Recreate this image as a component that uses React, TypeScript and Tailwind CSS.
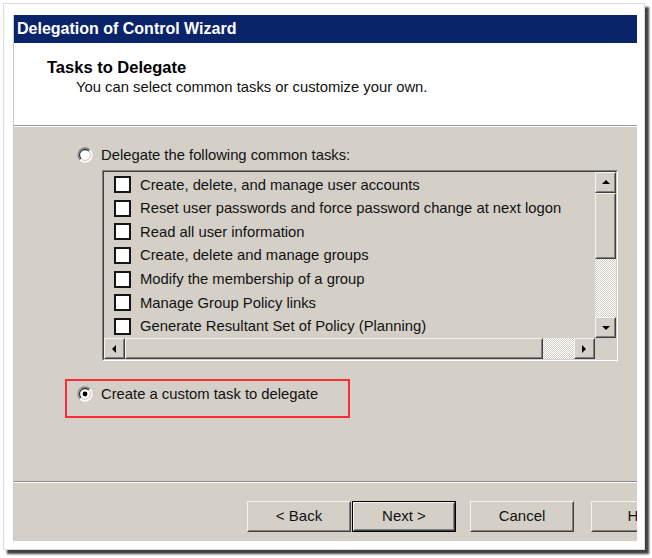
import React from "react";

const font = { fontFamily: '"Liberation Sans", Arial, sans-serif' };

const tasks = [
  "Create, delete, and manage user accounts",
  "Reset user passwords and force password change at next logon",
  "Read all user information",
  "Create, delete and manage groups",
  "Modify the membership of a group",
  "Manage Group Policy links",
  "Generate Resultant Set of Policy (Planning)",
];

function Radio({ checked }: { checked?: boolean }) {
  return (
    <svg width="16" height="16" viewBox="0 0 16 16" className="shrink-0">
      <circle cx="8" cy="8" r="6.5" fill="#fff" />
      <path d="M3.05 12.95 A7 7 0 0 1 12.95 3.05" fill="none" stroke="#8a8a8a" strokeWidth="1.3" />
      <path d="M12.95 3.05 A7 7 0 0 1 3.05 12.95" fill="none" stroke="#ffffff" strokeWidth="1.3" />
      <path d="M4.1 11.9 A5.5 5.5 0 0 1 11.9 4.1" fill="none" stroke="#303030" strokeWidth="1.3" />
      <path d="M11.9 4.1 A5.5 5.5 0 0 1 4.1 11.9" fill="none" stroke="#d4d0c8" strokeWidth="1.3" />
      {checked && <circle cx="8" cy="8" r="2.4" fill="#000" />}
    </svg>
  );
}

function Raised({ className = "", children }: { className?: string; children?: React.ReactNode }) {
  return (
    <div
      className={`border border-t-[#f4f3f0] border-l-[#f4f3f0] border-r-[#404040] border-b-[#404040] bg-[#d4d0c8] ${className}`}
    >
      <div className="w-full h-full border border-t-[#d4d0c8] border-l-[#d4d0c8] border-r-[#808080] border-b-[#808080] flex items-center justify-center">
        {children}
      </div>
    </div>
  );
}

function Arrow({ dir }: { dir: "up" | "down" | "left" | "right" }) {
  const pts = {
    up: "1,6 5,2 9,6",
    down: "1,2 5,6 9,2",
    left: "6,1 2,5 6,9",
    right: "2,1 6,5 2,9",
  }[dir];
  return (
    <svg width="10" height="10" viewBox="0 0 10 10" className={dir === "down" ? "mt-[3px]" : ""}>
      <polygon points={pts} fill="#000" />
    </svg>
  );
}

function Button({ label, isDefault }: { label: string; isDefault?: boolean }) {
  return (
    <div className={`shrink-0 w-[104px] h-[31px] ${isDefault ? "border border-black" : ""}`}>
      <Raised className="w-full h-full text-[15px] text-[#111]">{label}</Raised>
    </div>
  );
}

const dither =
  "bg-[repeating-conic-gradient(#ffffff_0_25%,#d4d0c8_0_50%)] bg-[length:2px_2px]";

export default function App() {
  return (
    <div className="w-[652px] h-[558px] bg-white overflow-hidden" style={font}>
      <div className="ml-[3px] mt-[3px] w-[642px] h-[547px] bg-white border border-[#dcdcdc] shadow-[4px_4px_2px_rgba(30,30,30,0.85)] pl-[9px] pt-[11px]">
        <div className="w-[624px] h-[526px] flex flex-col border-l border-[#c8c8c8]">
          {/* title bar */}
          <div className="h-[28px] bg-[#0a246a] flex items-center pl-[3px] text-white font-bold text-[16px]">
            Delegation of Control Wizard
          </div>

          {/* header */}
          <div className="h-[82px] bg-white pl-[33px] pt-[14px]">
            <div className="text-[16.5px] font-bold leading-[20px] text-black">Tasks to Delegate</div>
            <div className="mt-[2px] pl-[29px] text-[14.8px] leading-[17px] text-[#111]">
              You can select common tasks or customize your own.
            </div>
          </div>
          <div className="h-px bg-[#9a9a9a]" />
          <div className="h-px bg-white" />

          {/* body */}
          <div className="flex-1 bg-[#d4d0c8] flex flex-col">
            <div className="mt-[19px] ml-[63px] h-[18px] flex items-center gap-[8px] text-[14.8px] text-[#111]">
              <Radio />
              <span>Delegate the following common tasks:</span>
            </div>

            <div className="mt-[6px] ml-[88px] mr-[19px] h-[191px] border border-t-[#808080] border-l-[#808080] border-r-white border-b-white">
              <div className="w-full h-full border border-t-[#404040] border-l-[#404040] border-r-[#d4d0c8] border-b-[#d4d0c8] grid grid-cols-[1fr_21px] grid-rows-[1fr_21px]">
                <div className="pt-[1px] overflow-hidden">
                  {tasks.map((t) => (
                    <div key={t} className="h-[23.6px] flex items-center pl-[10px] gap-[9px] text-[14.8px] text-[#111] whitespace-nowrap">
                      <div className="w-[17px] h-[17px] shrink-0 bg-white border-[2px] border-[#151515]" />
                      <span>{t}</span>
                    </div>
                  ))}
                </div>

                {/* vertical scrollbar */}
                <div className="flex flex-col">
                  <Raised className="h-[21px] shrink-0">
                    <Arrow dir="up" />
                  </Raised>
                  <Raised className="h-[66px] shrink-0" />
                  <div className={`flex-1 ${dither}`} />
                  <Raised className="h-[21px] shrink-0">
                    <Arrow dir="down" />
                  </Raised>
                </div>

                {/* horizontal scrollbar */}
                <div className="flex">
                  <Raised className="w-[21px] shrink-0">
                    <Arrow dir="left" />
                  </Raised>
                  <Raised className="w-[418px] shrink-0" />
                  <div className={`flex-1 ${dither}`} />
                  <Raised className="w-[21px] shrink-0">
                    <Arrow dir="right" />
                  </Raised>
                </div>
                <div className="bg-[#d4d0c8]" />
              </div>
            </div>

            {/* red annotation box */}
            <div className="mt-[18px] ml-[51px] w-[285px] h-[39px] border-2 border-red-500 pt-[4px] pl-[10px]">
              <div className="h-[18px] flex items-center gap-[8px] text-[14.8px] text-[#111]">
                <Radio checked />
                <span>Create a custom task to delegate</span>
              </div>
            </div>
          </div>

          <div className="h-px bg-[#8a8a8a]" />
          <div className="h-px bg-white" />

          {/* buttons */}
          <div className="h-[58px] bg-[#d4d0c8] pt-[18px] pl-[233px] flex items-start overflow-hidden">
            <Button label="< Back" />
            <div className="ml-[1px]">
              <Button label="Next >" isDefault />
            </div>
            <div className="ml-[14px]">
              <Button label="Cancel" />
            </div>
            <div className="ml-[17px] shrink-0">
              <Button label="Help" />
            </div>
          </div>
        </div>
      </div>
    </div>
  );
}
